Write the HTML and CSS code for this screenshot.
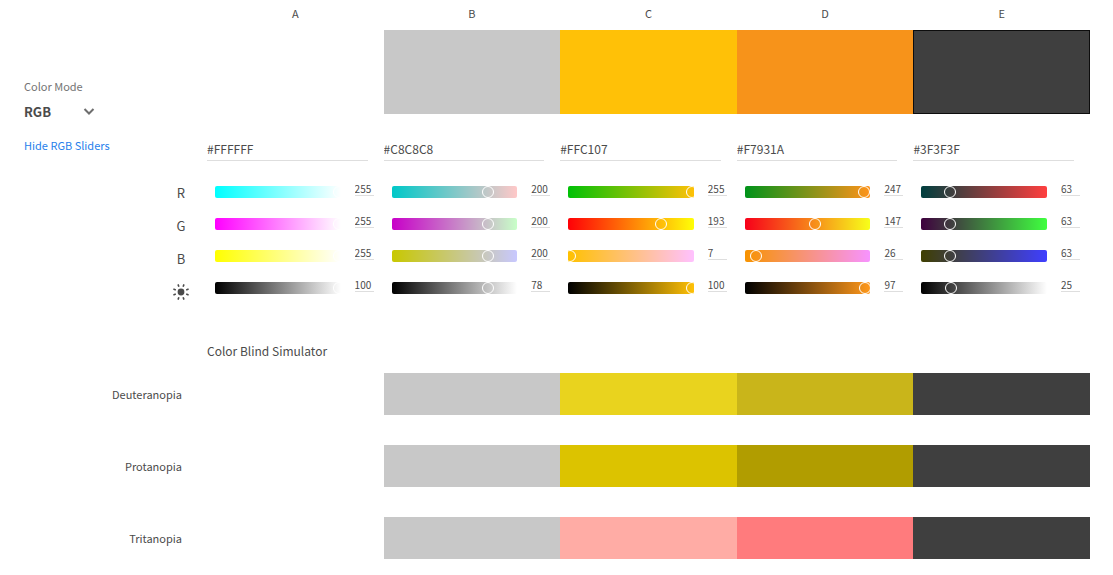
FILE: index.html
```html
<!DOCTYPE html>
<html lang="en">
<head>
<meta charset="utf-8">
<meta name="viewport" content="width=device-width, initial-scale=1">
<title>Color Blind Simulator</title>
<link rel="stylesheet" href="styles.css">
</head>
<body>
<main class="page">
  <section class="editor">
    <aside class="mode">
      <label class="mode-label" for="mode">Color Mode</label>
      <div class="mode-picker">
        <select id="mode" class="mode-select"><option>RGB</option><option>CMYK</option><option>LAB</option></select>
        <svg class="chevron" viewBox="0 0 12 8" aria-hidden="true"><path d="M1.5 1 6 5.5 10.5 1"/></svg>
      </div>
      <a class="toggle" href="#sliders">Hide RGB Sliders</a>
    </aside>
    <div class="channels">
      <span>R</span><span>G</span><span>B</span>
      <svg class="sun" viewBox="0 0 16 16" role="img" aria-label="Brightness"><circle cx="8" cy="8" r="3.4"/><path d="M10.1 2.8 11 .4M13.2 5.9l2.4-.9M13.2 10.1l2.4.9M10.1 13.2l.9 2.4M5.900 13.200l-.9 2.400M2.800 10.100l-2.400.9M2.800 5.900.4 5M5.900 2.800 5 .4"/></svg>
    </div>
    <div class="colors">
      <div class="letters"><span>A</span><span>B</span><span>C</span><span>D</span><span>E</span></div>
      <div class="palette" id="palette"></div>
      <div class="controls" id="sliders"></div>
    </div>
  </section>
  <section class="simulator">
    <h2 class="title">Color Blind Simulator</h2>
    <div class="sim-row"><span class="sim-label">Deuteranopia</span><div class="strip"><i class="white"></i><i class="gray"></i><i class="deu-c"></i><i class="deu-d"></i><i class="dark"></i></div></div>
    <div class="sim-row"><span class="sim-label">Protanopia</span><div class="strip"><i class="white"></i><i class="gray"></i><i class="pro-c"></i><i class="pro-d"></i><i class="dark"></i></div></div>
    <div class="sim-row"><span class="sim-label">Tritanopia</span><div class="strip"><i class="white"></i><i class="gray"></i><i class="tri-c"></i><i class="tri-d"></i><i class="dark"></i></div></div>
  </section>
</main>
<script src="app.js"></script>
</body>
</html>
```
FILE: styles.css
```css
* { box-sizing: border-box; }
body { margin: 0; background: #fff; color: #4b4b4b; font: 11px/16px "Noto Sans CJK SC", "Noto Sans", sans-serif; }
button, input, select { font: inherit; color: inherit; padding: 0; margin: 0; border: 0; border-radius: 0; background: none; outline: 0; }

.page { padding: 0 23px 16px 0; }
.editor { display: grid; grid-template-columns: 158px 49px minmax(0, 1fr); align-items: start; }

.mode { display: flex; flex-direction: column; align-items: flex-start; padding: 78px 0 0 24px; }
.mode-label { color: #747474; }
.mode-picker { display: flex; align-items: center; width: 71px; margin: 8px 0 15px; height: 20px; }
.mode-select { appearance: none; width: 100%; font-size: 13px; font-weight: 700; line-height: 20px; }
.chevron { flex: none; width: 12px; height: 8px; fill: none; stroke: #6e6e6e; stroke-width: 2; }
.toggle { color: #2680eb; text-decoration: none; }

.channels { display: grid; grid-auto-rows: 33px; place-items: center; padding: 176px 3px 0 0; font-size: 13px; }
.sun { width: 16px; height: 16px; fill: #4b4b4b; stroke: #4b4b4b; stroke-width: 1.6; }
.sun circle { stroke: none; }

.letters, .palette, .controls, .strip { display: grid; grid-template-columns: repeat(5, minmax(0, 1fr)); }
.letters { height: 30px; line-height: 26px; text-align: center; }
.palette { height: 84px; }
.swatch { background: var(--color); }
.swatch.selected { border: 1px solid #0d0d0d; }

.controls { padding-top: 24px; }
.hex { display: block; width: calc(100% - 16px); height: 23px; margin-bottom: 15px; padding-bottom: 2px; border-bottom: 1px solid #dedede; font-size: 12px; }
.channel { display: flex; align-items: center; gap: 14px; height: 32px; padding: 0 10px 0 8px; }
.track { flex: 1; height: 12px; overflow: hidden; border-radius: 2px; }
.range { appearance: none; display: block; width: calc(100% + 12px); height: 12px; margin-left: -8px; }
.range::-webkit-slider-thumb { appearance: none; width: 12px; height: 12px; border: 1px solid #fff; border-radius: 50%; background: transparent; }
.value { width: 19px; height: 16px; margin-bottom: 8px; padding-top: 2px; border-bottom: 1px solid #dedede; font-size: 10px; }

.title { margin: 35px 0 14px 207px; font-size: 12px; line-height: 16px; font-weight: 400; }
.sim-row { display: grid; grid-template-columns: 182px minmax(0, 1fr); column-gap: 25px; align-items: center; }
.sim-row + .sim-row { margin-top: 30px; }
.sim-label { text-align: right; }
.strip { height: 42px; }
.white { background: #fff; }
.gray { background: #c8c8c8; }
.dark { background: #3f3f3f; }
.deu-c { background: #e9d31e; }
.deu-d { background: #c9b51a; }
.pro-c { background: #dcc300; }
.pro-d { background: #b19d00; }
.tri-c { background: #ffaca5; }
.tri-d { background: #ff7b7d; }
```
FILE: app.js
```js
const colors = [[255, 255, 255], [200, 200, 200], [255, 193, 7], [247, 147, 26], [63, 63, 63]];
const brightness = [100, 78, 100, 97, 25];
const names = ["Red", "Green", "Blue", "Brightness"];
const rgb = c => `rgb(${c.join(",")})`;
const hex = c => "#" + c.map(v => v.toString(16).padStart(2, "0")).join("").toUpperCase();

colors.forEach((color, i) => {
  const letter = "ABCDE"[i];
  document.getElementById("palette").insertAdjacentHTML("beforeend",
    `<button type="button" class="swatch${i === 4 ? " selected" : ""}" style="--color:${rgb(color)}" aria-label="Color ${letter}"></button>`);
  const rows = names.map((name, k) => {
    let from, to;
    if (k < 3) {
      from = color.slice(); from[k] = 0;
      to = color.slice(); to[k] = 255;
    } else {
      const peak = Math.max(...color);
      from = [0, 0, 0];
      to = color.map(v => Math.round(v * 255 / peak));
    }
    const value = k < 3 ? color[k] : brightness[i];
    const label = `${name} of color ${letter}`;
    return `<div class="channel">
      <div class="track" style="background:linear-gradient(to right,${rgb(from)},${rgb(to)})"><input class="range" type="range" min="0" max="${k < 3 ? 255 : 100}" value="${value}" aria-label="${label}"></div>
      <input class="value" type="text" value="${value}" aria-label="${label} value">
    </div>`;
  }).join("");
  document.getElementById("sliders").insertAdjacentHTML("beforeend",
    `<div><input class="hex" type="text" value="${hex(color)}" aria-label="Hex of color ${letter}">${rows}</div>`);
});
```
